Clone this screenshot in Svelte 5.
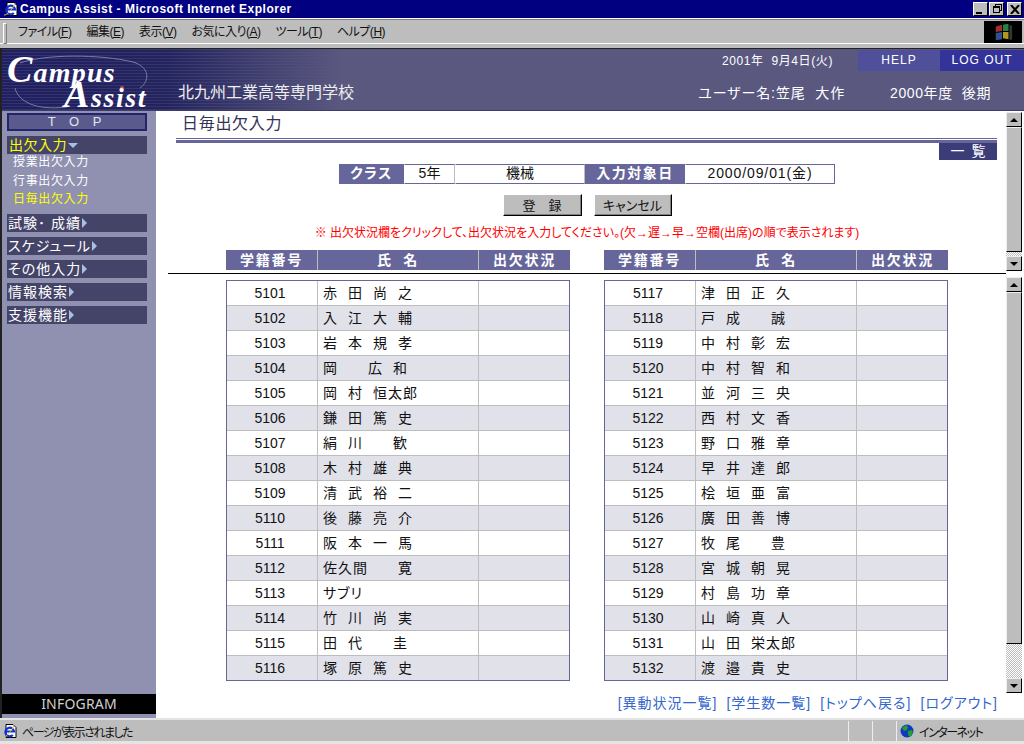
<script>
  const menus = [
    ['ファイル', 'F'],
    ['編集', 'E'],
    ['表示', 'V'],
    ['お気に入り', 'A'],
    ['ツール', 'T'],
    ['ヘルプ', 'H']
  ];

  const side = ['試験･ 成績', 'スケジュール', 'その他入力', '情報検索', '支援機能'];

  const left = [
    ['5101', '赤 田 尚 之'], ['5102', '入 江 大 輔'], ['5103', '岩 本 規 孝'], ['5104', '岡   広 和'],
    ['5105', '岡 村 恒太郎'], ['5106', '鎌 田 篤 史'], ['5107', '絹 川   歓'], ['5108', '木 村 雄 典'],
    ['5109', '清 武 裕 二'], ['5110', '後 藤 亮 介'], ['5111', '阪 本 一 馬'], ['5112', '佐久間   寛'],
    ['5113', 'サブリ'], ['5114', '竹 川 尚 実'], ['5115', '田 代   圭'], ['5116', '塚 原 篤 史']
  ];

  const right = [
    ['5117', '津 田 正 久'], ['5118', '戸 成   誠'], ['5119', '中 村 彰 宏'], ['5120', '中 村 智 和'],
    ['5121', '並 河 三 央'], ['5122', '西 村 文 香'], ['5123', '野 口 雅 章'], ['5124', '早 井 達 郎'],
    ['5125', '桧 垣 亜 富'], ['5126', '廣 田 善 博'], ['5127', '牧 尾   豊'], ['5128', '宮 城 朝 晃'],
    ['5129', '村 島 功 章'], ['5130', '山 崎 真 人'], ['5131', '山 田 栄太郎'], ['5132', '渡 邉 貴 史']
  ];

  const links = ['異動状況一覧', '学生数一覧', 'トップへ戻る', 'ログアウト'];
</script>

{#snippet ieIcon()}
  <svg class="ie" viewBox="0 0 16 16" width="16" height="16">
    <path d="M4 1.5h7l3 3v10H4z" fill="#fff" stroke="#000" />
    <path d="M3.5 8.5h8.5A4.3 4.3 0 1 0 10.8 12" fill="none" stroke="#1030d0" stroke-width="2.2" />
    <path d="M1 14C3 15 10 8 12 2" fill="none" stroke="#d8c040" stroke-width="1" />
  </svg>
{/snippet}

{#snippet scrollbar(thumbH, rest)}
  <div class="scroll">
    <div class="sbtn"><i class="up"></i></div>
    <div class="thumb" style="height: {thumbH}px"></div>
    <div class="track" style="height: {rest}px"></div>
    <div class="sbtn"><i class="down"></i></div>
  </div>
{/snippet}

{#snippet heads()}
  <div class="heads">
    <div>学籍番号</div>
    <div>氏 名</div>
    <div>出欠状況</div>
  </div>
{/snippet}

{#snippet roster(rows)}
  <table class="roster">
    <colgroup><col class="c1" /><col class="c2" /><col class="c3" /></colgroup>
    <tbody>
      {#each rows as r}
        <tr>
          <td class="num">{r[0]}</td>
          <td class="name">{r[1]}</td>
          <td></td>
        </tr>
      {/each}
    </tbody>
  </table>
{/snippet}

<div class="window">
  <div class="titlebar">
    {@render ieIcon()}
    <span class="title">Campus Assist - Microsoft Internet Explorer</span>
    <div class="winbtns">
      <button class="wb"><i class="min"></i></button>
      <button class="wb"><i class="rest"></i></button>
      <button class="wb close">
        <svg viewBox="0 0 10 9" width="10" height="9"><path d="M1 0l8 9M9 0L1 9" stroke="#000" stroke-width="2" fill="none" /></svg>
      </button>
    </div>
  </div>

  <div class="menubar">
    <div class="grip"></div>
    <div class="menus">
      {#each menus as m}
        <span>{m[0]}(<u>{m[1]}</u>)</span>
      {/each}
    </div>
    <div class="brand">
      <svg viewBox="0 0 22 22" width="20" height="20">
        <path d="M3 5l7-2v7l-7 1z" fill="#a03030" />
        <path d="M11 3l6-1v8l-6 0z" fill="#2c8040" />
        <path d="M3 12l7-1v8l-7 1z" fill="#305090" />
        <path d="M11 11h6v8l-6-1z" fill="#b09820" />
        <path d="M18 3l3 1v15l-3 1z" fill="#303830" />
      </svg>
    </div>
  </div>

  <div class="page">
    <header class="top-header">
      <div class="logo">
        <svg class="swoosh" viewBox="0 0 156 62" width="156" height="62">
          <path d="M20 14C45 5 100 5 133 13C150 18 150 32 140 39" fill="none" stroke="#7a7aa8" stroke-width="1" />
          <path d="M15 39C18 52 35 62 67 58" fill="none" stroke="#7a7aa8" stroke-width="1" />
          <circle cx="122" cy="39" r="2" fill="#e05050" />
        </svg>
        <span class="campus"><b>C</b>ampus</span>
        <span class="assist"><b>A</b>ssist</span>
      </div>
      <div class="school">北九州工業高等専門学校</div>
      <div class="head-right">
        <div class="head-top">
          <span class="date">2001年 &nbsp;9月4日(火)</span>
          <a class="help">HELP</a>
          <a class="logout">LOG OUT</a>
        </div>
        <div class="head-bottom">
          <span class="user">ユーザー名:笠尾 &nbsp;大作</span>
          <span class="year">2000年度 &nbsp;後期</span>
        </div>
      </div>
    </header>

    <div class="body">
      <nav class="sidebar">
        <div class="top-btn">T O P</div>
        <div class="item on">出欠入力<i class="arrow-down"></i></div>
        <div class="subs">
          <div>授業出欠入力</div>
          <div>行事出欠入力</div>
          <div class="cur">日毎出欠入力</div>
        </div>
        {#each side as s}
          <div class="item">{s}<i class="arrow-right"></i></div>
        {/each}
        <div class="infogram">INFOGRAM</div>
      </nav>

      <main class="main">
        <section class="frame head-frame">
          <div class="frame-body">
            <h1>日毎出欠入力</h1>
            <div class="rule"></div>
            <div class="list-row"><a class="list-btn">一 覧</a></div>
            <div class="info">
              <div class="lbl k1">クラス</div>
              <div class="val v1">5年</div>
              <div class="val v2">機械</div>
              <div class="lbl k2">入力対象日</div>
              <div class="val v3">2000/09/01(金)</div>
            </div>
            <div class="actions">
              <button class="btn b1">登　録</button>
              <button class="btn b2">キャンセル</button>
            </div>
            <p class="note">※ 出欠状況欄をクリックして、出欠状況を入力してください。(欠→遅→早→空欄(出席)の順で表示されます)</p>
            <div class="columns head-cols">
              {@render heads()}
              {@render heads()}
            </div>
          </div>
          {@render scrollbar(125, 4)}
        </section>

        <section class="frame list-frame">
          <div class="frame-body">
            <div class="columns">
              {@render roster(left)}
              {@render roster(right)}
            </div>
          </div>
          {@render scrollbar(352, 34)}
        </section>

        <footer class="links">
          {#each links as l}
            <a>[{l}]</a>
          {/each}
        </footer>
      </main>
    </div>
  </div>

  <div class="statusbar">
    <div class="st-main">
      {@render ieIcon()}
      <span>ページが表示されました</span>
    </div>
    <div class="st-cell"></div>
    <div class="st-cell"></div>
    <div class="st-zone">
      <svg viewBox="0 0 14 14" width="14" height="14">
        <circle cx="7" cy="7" r="6.5" fill="#1038c0" />
        <path d="M2 4l4-3 2 2-1 3-3 1zM8 7l4-1 1 3-3 4-2-2z" fill="#20a030" />
      </svg>
      <span>インターネット</span>
    </div>
  </div>
</div>

<style>
  :global(body) {
    margin: 0;
    overflow: hidden;
    background: #bdbdbd;
  }

  .window {
    width: 1024px;
    height: 744px;
    display: flex;
    flex-direction: column;
    font-family: "Liberation Sans", "Noto Sans CJK JP", sans-serif;
    font-feature-settings: "palt";
    font-size: 12px;
    color: #000;
  }

  /* window chrome */
  .titlebar {
    height: 18px;
    flex: none;
    background: #000080;
    display: flex;
    align-items: center;
    padding-left: 3px;
  }
  .title {
    margin-left: 1px;
    color: #fff;
    font-weight: bold;
    font-size: 12px;
    letter-spacing: 0.5px;
    white-space: pre;
  }
  .winbtns {
    margin-left: auto;
    margin-right: 2px;
    display: flex;
  }
  .wb {
    width: 15px;
    height: 14px;
    padding: 0;
    margin-left: 1px;
    background: #bdbdbd;
    border: 1px solid;
    border-color: #fff #000 #000 #fff;
    display: flex;
    align-items: center;
    justify-content: center;
    position: relative;
  }
  .wb.close {
    margin-left: 3px;
  }
  .min {
    width: 6px;
    height: 2px;
    background: #000;
    margin-top: 7px;
    margin-right: 3px;
  }
  .rest {
    width: 7px;
    height: 7px;
    border: 1px solid #000;
    border-top-width: 2px;
    box-sizing: border-box;
    box-shadow: 2px -2px 0 -1px #bdbdbd, 2px -2px 0 0 #000;
  }

  .menubar {
    height: 30px;
    flex: none;
    box-sizing: border-box;
    background: #bdbdbd;
    border-top: 1px solid #fff;
    border-bottom: 4px solid #bdbdbd;
    box-shadow: inset 0 -1px 0 #fff, inset 0 1px 0 #808080;
    display: flex;
    align-items: flex-start;
    position: relative;
  }
  .grip {
    width: 2px;
    height: 19px;
    margin: 4px 0 0 3px;
    background: #bdbdbd;
    border: 1px solid;
    border-color: #fff #808080 #808080 #fff;
  }
  .menus {
    margin: 4px 0 0 11px;
    display: flex;
    gap: 15px;
    line-height: 18px;
    letter-spacing: -0.5px;
    color: #111;
  }
  .brand {
    margin: 2px 2px 0 auto;
    width: 38px;
    height: 22px;
    background: #000;
    display: flex;
    justify-content: center;
    align-items: center;
  }

  /* page */
  .page {
    flex: 1;
    min-height: 0;
    display: flex;
    flex-direction: column;
    background: #fff;
    border-left: 2px solid #222;
    border-top: 1px solid #222;
  }

  .top-header {
    height: 62px;
    flex: none;
    box-sizing: border-box;
    display: flex;
    color: #fff;
    border-bottom: 1px solid #3c3c66;
    background:
      repeating-linear-gradient(180deg, rgba(90, 88, 127, 0.35) 0 1px, transparent 1px 3px),
      linear-gradient(90deg, #1f1f62 0, #23235f 165px, #5a587f 340px);
  }
  .logo {
    width: 154px;
    flex: none;
    position: relative;
    font-family: "Liberation Serif", serif;
    font-style: italic;
    font-weight: bold;
    color: #fff;
  }
  .swoosh {
    position: absolute;
    left: -2px;
    top: 0;
  }
  .campus,
  .assist {
    position: absolute;
    line-height: 1;
    letter-spacing: 1.2px;
    font-size: 28px;
  }
  .campus b,
  .assist b {
    font-size: 38px;
  }
  .campus {
    left: 5px;
    top: 1px;
  }
  .assist {
    left: 62px;
    top: 26px;
    letter-spacing: 1.6px;
  }
  .school {
    margin: 34px 0 0 22px;
    font-size: 16px;
    line-height: 20px;
    white-space: nowrap;
    color: #eee;
  }
  .head-right {
    margin-left: auto;
    display: flex;
    flex-direction: column;
    align-items: flex-end;
  }
  .head-top {
    display: flex;
    height: 21px;
    margin-top: 1px;
    align-items: stretch;
    line-height: 21px;
  }
  .date {
    margin-right: 25px;
    white-space: nowrap;
    line-height: 23px;
    letter-spacing: 0.6px;
  }
  .help,
  .logout {
    text-align: center;
    letter-spacing: 1px;
  }
  .help {
    width: 82px;
    background: #50509a;
  }
  .logout {
    width: 84px;
    background: #33339a;
  }
  .head-bottom {
    margin-top: 12px;
    margin-right: 33px;
    display: flex;
    gap: 45px;
    font-size: 14px;
    line-height: 20px;
    letter-spacing: 0.6px;
    white-space: nowrap;
  }
  .user {
    letter-spacing: 0.9px;
  }

  .body {
    flex: 1;
    min-height: 0;
    display: flex;
  }

  .sidebar {
    width: 154px;
    flex: none;
    box-sizing: border-box;
    padding: 2px 9px 4px 5px;
    background: #9090b0;
    display: flex;
    flex-direction: column;
    gap: 5px;
    color: #fff;
  }
  .top-btn {
    height: 18px;
    box-sizing: border-box;
    border: 2px solid #24246c;
    background: #5a5a8c;
    text-align: center;
    line-height: 14px;
    letter-spacing: 5px;
    font-size: 13px;
    color: #e4e4ee;
  }
  .item {
    height: 18px;
    background: #444468;
    font-size: 14px;
    line-height: 18px;
    display: flex;
    align-items: center;
    white-space: pre;
    padding-left: 1px;
    letter-spacing: 1px;
  }
  .item.on {
    color: #ffff00;
    padding-left: 2px;
    margin-bottom: -5px;
    letter-spacing: 0.5px;
  }
  .arrow-right {
    margin-left: 1px;
    border-left: 5px solid #a8c0e4;
    border-top: 5px solid transparent;
    border-bottom: 5px solid transparent;
  }
  .arrow-down {
    margin-left: 1px;
    border-top: 5px solid #a8c0e4;
    border-left: 5px solid transparent;
    border-right: 5px solid transparent;
  }
  .subs {
    padding-left: 6px;
    margin-top: -1px;
    line-height: 18.5px;
    letter-spacing: 0.65px;
    height: 56px;
  }
  .cur {
    color: #ffff00;
  }
  .infogram {
    margin: auto -9px 0 -5px;
    height: 20px;
    background: #000;
    color: #d0d0d0;
    font-family: "Noto Sans", sans-serif;
    font-size: 14px;
    line-height: 20px;
    text-align: center;
    letter-spacing: 0.2px;
  }

  .main {
    flex: 1;
    min-width: 0;
    display: flex;
    flex-direction: column;
  }
  .frame {
    display: flex;
    padding-right: 2px;
    flex: none;
  }
  .frame-body {
    flex: 1;
    min-width: 0;
    margin-left: 12px;
    display: flex;
    flex-direction: column;
  }
  .head-frame {
    height: 163px;
  }
  .head-frame .frame-body {
    border-bottom: 1px solid #000;
  }
  .list-frame {
    height: 421px;
  }

  .scroll {
    width: 16px;
    flex: none;
    margin-top: 1px;
    display: flex;
    flex-direction: column;
    background: #fff;
  }
  .list-frame .scroll {
    margin-top: 3px;
  }
  .sbtn,
  .thumb {
    box-sizing: border-box;
    background: #bdbdbd;
    border: 1px solid;
    border-color: #eee #000 #000 #eee;
    flex: none;
  }
  .sbtn {
    height: 15px;
    display: flex;
    align-items: center;
    justify-content: center;
  }
  .track {
    flex: none;
    background: repeating-conic-gradient(#bdbdbd 0 25%, #fff 0 50%) 0 0 / 2px 2px;
  }
  .up {
    border-bottom: 4px solid #000;
    border-left: 4px solid transparent;
    border-right: 4px solid transparent;
  }
  .down {
    border-top: 4px solid #000;
    border-left: 4px solid transparent;
    border-right: 4px solid transparent;
  }

  /* attendance form */
  h1 {
    margin: 0 0 0 14px;
    height: 27px;
    font-size: 16px;
    font-weight: normal;
    line-height: 26px;
    letter-spacing: 0.7px;
    color: #333355;
  }
  .rule {
    margin: 0 9px 0 8px;
    height: 5px;
    box-sizing: border-box;
    border-top: 1px solid #66669a;
    border-bottom: 3px solid #66669a;
  }
  .list-row {
    margin-right: 9px;
    display: flex;
    justify-content: flex-end;
  }
  .list-btn {
    width: 58px;
    height: 17px;
    background: #3c3c78;
    color: #fff;
    text-align: center;
    font-size: 14px;
    line-height: 17px;
    word-spacing: 3px;
    white-space: pre;
  }
  .info {
    margin: 4px auto 0;
    display: flex;
    height: 20px;
    font-size: 14px;
    line-height: 17px;
  }
  .lbl {
    background: #66669a;
    color: #fff;
    font-weight: bold;
    text-align: center;
    line-height: 19px;
    font-size: 14px;
    letter-spacing: 1.5px;
  }
  .val {
    box-sizing: border-box;
    border: 1px solid;
    border-color: #66669a #bdbdbd #66669a transparent;
    text-align: center;
    color: #111;
  }
  .k1 {
    width: 65px;
  }
  .k2 {
    width: 100px;
  }
  .v1 {
    width: 51px;
  }
  .v2 {
    width: 130px;
  }
  .v3 {
    width: 150px;
    border-right-color: #66669a;
    letter-spacing: 0.9px;
  }
  .actions {
    margin: 10px auto 0;
    display: flex;
    gap: 12px;
  }
  .btn {
    height: 22px;
    padding: 0 0 3px;
    box-sizing: border-box;
    background: #bdbdbd;
    border: 1px solid;
    border-color: #fff #000 #000 #fff;
    box-shadow: inset -1px -1px 0 #808080;
    font-family: inherit;
    font-feature-settings: inherit;
    font-size: 13px;
    color: #111;
  }
  .b1 {
    width: 79px;
  }
  .b2 {
    width: 78px;
  }
  .note {
    margin: 10px 0 0;
    text-align: center;
    color: #f00;
    font-size: 12px;
    line-height: 14px;
    white-space: nowrap;
  }
  .columns {
    width: 722px;
    margin: 0 auto;
    display: flex;
    justify-content: space-between;
    position: relative;
  }
  .head-cols {
    margin-top: 10px;
  }
  .heads {
    width: 344px;
    height: 20px;
    display: grid;
    grid-template-columns: 91px 160px 91px;
    gap: 1px;
    background: #bdbdbd;
    color: #fff;
    font-weight: bold;
    font-size: 14px;
    line-height: 20px;
    text-align: center;
    letter-spacing: 1.7px;
    word-spacing: 5px;
    white-space: pre;
  }
  .heads div {
    background: #66669a;
  }

  .list-frame .columns {
    margin-top: 6px;
  }
  .roster {
    width: 344px;
    box-sizing: border-box;
    table-layout: fixed;
    border-collapse: separate;
    border-spacing: 0;
    border: 1px solid #66669a;
    font-size: 14px;
    color: #111;
  }
  .c1 {
    width: 91px;
  }
  .c2 {
    width: 161px;
  }
  .c3 {
    width: 90px;
  }
  .roster td {
    height: 25px;
    box-sizing: border-box;
    padding: 0;
    border-right: 1px solid #bdbdbd;
    border-bottom: 1px solid #bdbdbd;
  }
  .roster td:last-child {
    border-right: none;
  }
  .roster tr:last-child td {
    height: 24px;
    border-bottom: none;
  }
  .roster tr:nth-child(even) td {
    background: #e1e1ea;
  }
  .roster .num {
    text-align: center;
    padding-right: 4px;
  }
  .roster .name {
    padding: 0 0 2px 5px;
    white-space: pre;
    letter-spacing: 1px;
    word-spacing: 5.1px;
  }

  .links {
    flex: 1;
    display: flex;
    justify-content: flex-end;
    gap: 9px;
    padding: 0 26px 0 0;
    color: #3366cc;
    font-size: 14px;
    line-height: 17px;
    letter-spacing: 1px;
    white-space: nowrap;
  }

  .statusbar {
    height: 26px;
    flex: none;
    box-sizing: border-box;
    background: #bdbdbd;
    border-top: 2px solid #e4e4e4;
    border-bottom: 3px solid #e4e4e4;
    padding-top: 1px;
    display: flex;
    color: #111;
    letter-spacing: -1.5px;
  }
  .st-main {
    width: 848px;
    flex: none;
    display: flex;
    align-items: center;
    padding-left: 2px;
    gap: 4px;
    box-sizing: border-box;
  }
  .st-cell {
    width: 24px;
    flex: none;
    box-sizing: border-box;
    border-left: 1px solid #eee;
  }
  .st-zone {
    flex: 1;
    display: flex;
    align-items: center;
    gap: 5px;
    padding-left: 3px;
    border-left: 1px solid #eee;
  }
</style>
